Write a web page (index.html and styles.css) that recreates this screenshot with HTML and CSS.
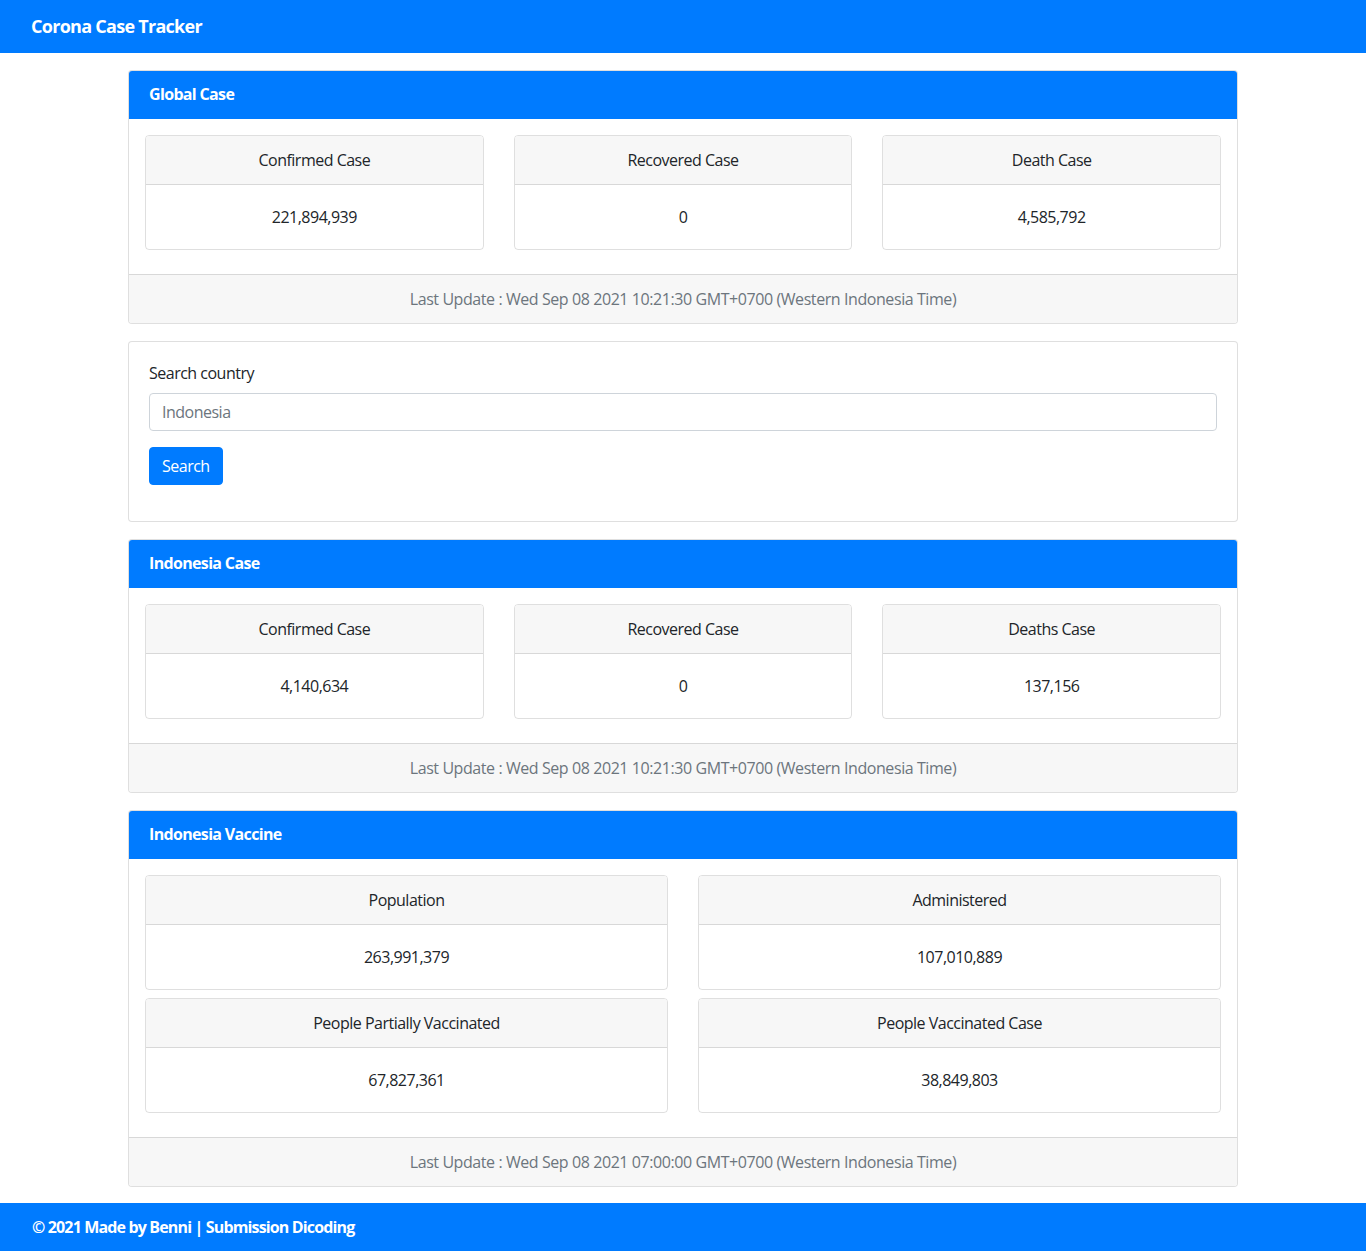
FILE: index.html
```html
<!DOCTYPE html>
<html lang="en">
<head>
<meta charset="utf-8">
<title>Corona Case Tracker</title>
<link rel="stylesheet" href="styles.css">
</head>
<body>
<nav class="navbar"><span class="brand">Corona Case Tracker</span></nav>

<main class="container">
  <section class="card">
    <div class="card-header primary">Global Case</div>
    <div class="card-body grid3">
      <div class="stat"><div class="stat-head">Confirmed Case</div><div class="stat-body">221,894,939</div></div>
      <div class="stat"><div class="stat-head">Recovered Case</div><div class="stat-body">0</div></div>
      <div class="stat"><div class="stat-head">Death Case</div><div class="stat-body">4,585,792</div></div>
    </div>
    <div class="card-footer">Last Update : Wed Sep 08 2021 10:21:30 GMT+0700 (Western Indonesia Time)</div>
  </section>

  <section class="card">
    <form class="search-body">
      <label class="label" for="country">Search country</label>
      <input class="input" id="country" type="text" placeholder="Indonesia">
      <button class="btn" type="button">Search</button>
    </form>
  </section>

  <section class="card">
    <div class="card-header primary">Indonesia Case</div>
    <div class="card-body grid3">
      <div class="stat"><div class="stat-head">Confirmed Case</div><div class="stat-body">4,140,634</div></div>
      <div class="stat"><div class="stat-head">Recovered Case</div><div class="stat-body">0</div></div>
      <div class="stat"><div class="stat-head">Deaths Case</div><div class="stat-body">137,156</div></div>
    </div>
    <div class="card-footer">Last Update : Wed Sep 08 2021 10:21:30 GMT+0700 (Western Indonesia Time)</div>
  </section>

  <section class="card">
    <div class="card-header primary">Indonesia Vaccine</div>
    <div class="card-body grid2">
      <div class="stat"><div class="stat-head">Population</div><div class="stat-body">263,991,379</div></div>
      <div class="stat"><div class="stat-head">Administered</div><div class="stat-body">107,010,889</div></div>
      <div class="stat"><div class="stat-head">People Partially Vaccinated</div><div class="stat-body">67,827,361</div></div>
      <div class="stat"><div class="stat-head">People Vaccinated Case</div><div class="stat-body">38,849,803</div></div>
    </div>
    <div class="card-footer">Last Update : Wed Sep 08 2021 07:00:00 GMT+0700 (Western Indonesia Time)</div>
  </section>
</main>

<footer class="footer">© 2021 Made by Benni | Submission Dicoding</footer>
</body>
</html>
```

FILE: styles.css
```css
* { box-sizing: border-box; }
html, body { margin: 0; padding: 0; }
body {
  font-family: "Segoe UI", "Open Sans", "Noto Sans", sans-serif;
  font-size: 16px;
  line-height: 24px;
  color: #212529;
  background: #fff;
  letter-spacing: -0.5px;
}
.navbar {
  background: #007bff;
  height: 53px;
  display: flex;
  align-items: center;
  padding: 0 31px 1px;
}
.brand {
  color: #fff;
  font-weight: 700;
  font-size: 18px;
  letter-spacing: -0.72px;
}
.container {
  width: 1110px;
  margin: 17px auto 16px;
  display: flex;
  flex-direction: column;
  gap: 17px;
}
.card {
  border: 1px solid rgba(0,0,0,.125);
  border-radius: 4px;
  background: #fff;
  overflow: hidden;
}
.card-header {
  padding: 11px 20px 12px;
  border-bottom: 1px solid rgba(0,0,0,.125);
  font-weight: 700;
}
.card-header.primary {
  background: #007bff;
  color: #fff;
  border-bottom-color: #007bff;
  letter-spacing: -0.66px;
}
.card-body {
  padding: 16px;
}
.grid3 {
  display: grid;
  grid-template-columns: repeat(3, 1fr);
  column-gap: 30px;
  row-gap: 8px;
}
.grid2 {
  display: grid;
  grid-template-columns: repeat(2, 1fr);
  column-gap: 30px;
  row-gap: 8px;
}
.grid3, .grid2 { padding-bottom: 24px; }
.stat {
  border: 1px solid rgba(0,0,0,.125);
  border-radius: 4px;
  text-align: center;
  overflow: hidden;
}
.stat-head {
  background: #f7f7f7;
  padding: 12px 20px;
  border-bottom: 1px solid rgba(0,0,0,.125);
}
.stat-body {
  padding: 20px;
}
.card-footer {
  background: #f7f7f7;
  border-top: 1px solid rgba(0,0,0,.125);
  padding: 12px 20px;
  text-align: center;
  color: #6c757d;
  letter-spacing: -0.42px;
}
.search-body {
  padding: 19px 20px 36px;
  margin: 0;
}
.label {
  display: block;
  margin-bottom: 8px;
}
.input {
  display: block;
  width: 100%;
  height: 38px;
  padding: 6px 12px;
  font: inherit;
  letter-spacing: -0.5px;
  border: 1px solid #ced4da;
  border-radius: 4px;
  color: #495057;
  margin: 0 0 16px;
}
.input::placeholder { color: #6c757d; opacity: 1; }
.btn {
  display: block;
  height: 38px;
  padding: 6px 12px;
  font: inherit;
  letter-spacing: -0.5px;
  color: #fff;
  background: #007bff;
  border: 1px solid #007bff;
  border-radius: 4px;
}
.footer {
  background: #007bff;
  color: #fff;
  font-weight: 700;
  height: 48px;
  display: flex;
  align-items: center;
  padding: 0 32px;
  letter-spacing: -0.85px;
}
```
